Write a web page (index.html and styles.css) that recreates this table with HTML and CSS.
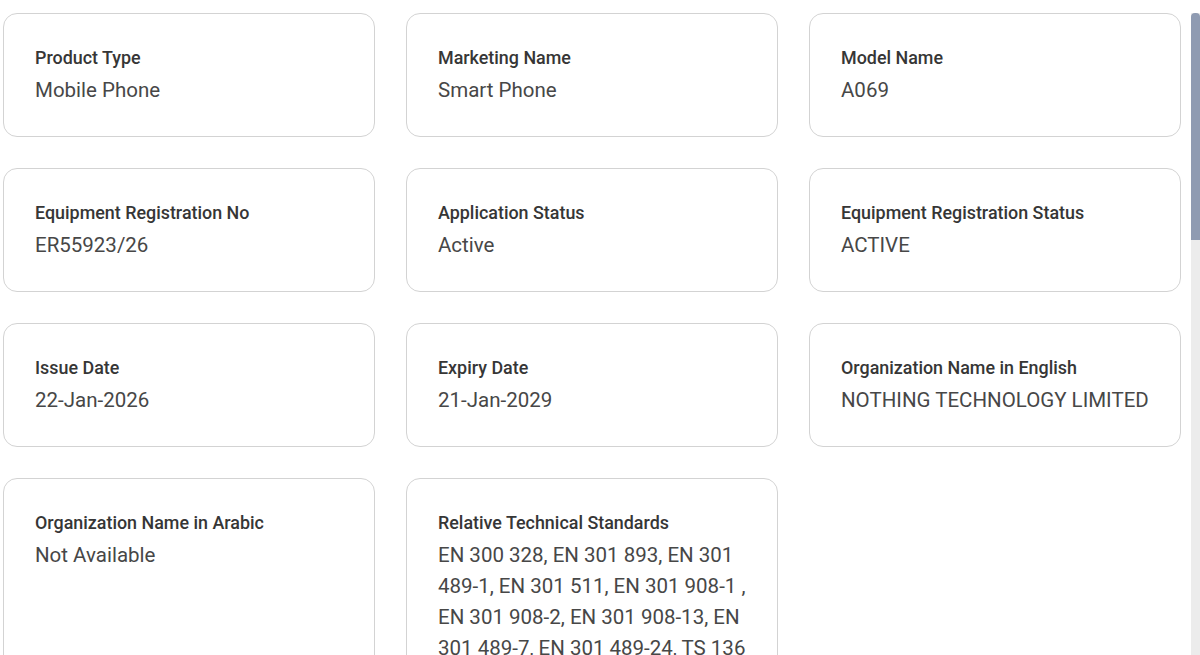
FILE: index.html
```html
<!DOCTYPE html>
<html lang="en">
<head>
<meta charset="utf-8">
<title>Equipment Details</title>
<link rel="stylesheet" href="styles.css">
</head>
<body>
<div class="frame">
  <main class="content">
    <div class="grid">
      <div class="card"><div class="label">Product Type</div><div class="value">Mobile Phone</div></div>
      <div class="card"><div class="label">Marketing Name</div><div class="value">Smart Phone</div></div>
      <div class="card"><div class="label">Model Name</div><div class="value">A069</div></div>
      <div class="card"><div class="label">Equipment Registration No</div><div class="value">ER55923/26</div></div>
      <div class="card"><div class="label">Application Status</div><div class="value">Active</div></div>
      <div class="card"><div class="label">Equipment Registration Status</div><div class="value">ACTIVE</div></div>
      <div class="card"><div class="label">Issue Date</div><div class="value">22-Jan-2026</div></div>
      <div class="card"><div class="label">Expiry Date</div><div class="value">21-Jan-2029</div></div>
      <div class="card"><div class="label">Organization Name in English</div><div class="value">NOTHING TECHNOLOGY LIMITED</div></div>
      <div class="card"><div class="label">Organization Name in Arabic</div><div class="value">Not Available</div></div>
      <div class="card"><div class="label">Relative Technical Standards</div><div class="value">EN 300 328, EN 301 893, EN 301 489-1, EN 301 511, EN 301 908-1 , EN 301 908-2, EN 301 908-13, EN 301 489-7, EN 301 489-24, TS 136 521-1, EN 62209-1, EN 62209-2, EN 62368-1</div></div>
    </div>
  </main>
  <div class="scrollbar"><div class="thumb"></div></div>
</div>
</body>
</html>
```
FILE: styles.css
```css
html, body {
  margin: 0;
  padding: 0;
  background: #ffffff;
}
body {
  font-family: Roboto, "Liberation Sans", Arial, sans-serif;
  overflow: hidden;
  height: 655px;
}
.frame {
  display: flex;
  height: 655px;
  overflow: hidden;
}
.content {
  flex: 1;
  padding: 13px 0 0 3px;
  overflow: hidden;
}
.grid {
  display: grid;
  grid-template-columns: repeat(3, 372px);
  column-gap: 31px;
  row-gap: 31px;
}
.card {
  box-sizing: border-box;
  min-height: 124px;
  border: 1.5px solid #d3d3d3;
  border-radius: 14px;
  padding: 33px 31px 20px 31px;
  background: #fff;
}
.label {
  font-size: 17.9px;
  line-height: 21px;
  font-weight: 500;
  color: #363636;
  margin-bottom: 7px;
}
.value {
  font-size: 20.5px;
  line-height: 31px;
  font-weight: 400;
  color: #474747;
}
.scrollbar {
  width: 9px;
  display: flex;
  flex-direction: column;
  padding-top: 13px;
  background: linear-gradient(#ffffff 0, #ffffff 13px, #ececec 13px);
}
.thumb {
  height: 227px;
  background: #8f9bb2;
  border-radius: 4px 4px 0 0;
}
```
